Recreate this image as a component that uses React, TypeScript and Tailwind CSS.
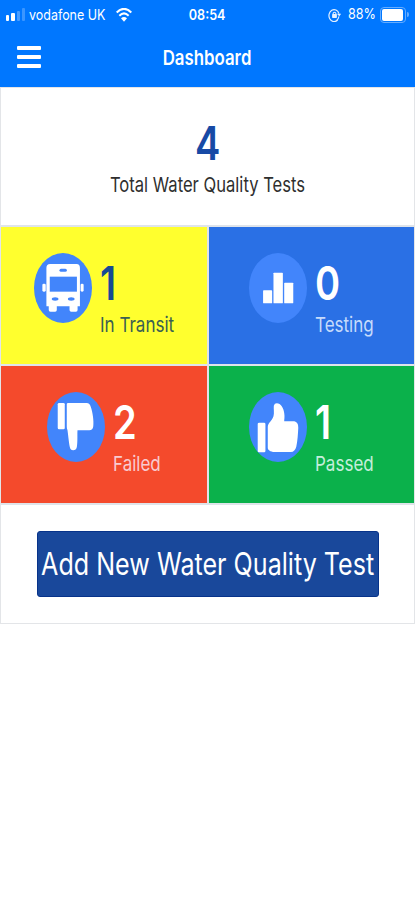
import React from "react";
import clsx from "clsx";

type TextProps = {
  children: React.ReactNode;
  className?: string;
};

// Slightly condensed single line text
const Narrow = ({ children, className }: TextProps) => (
  <span className={clsx("block w-max shrink-0 whitespace-nowrap", className)}>
    {children}
  </span>
);

const BusIcon = () => (
  <svg viewBox="102 83 173 210" className="h-[70px] w-[58px] shrink-0" preserveAspectRatio="none">
    <ellipse cx="188.5" cy="188" rx="86.5" ry="105" fill="#4285fb" />
    <g fill="#fff">
      <path d="M150 116H229Q239 116 239 128V243H232V254Q232 259 227 259H213Q208 259 208 254V243H170V254Q170 259 165 259H151Q146 259 146 254V243H139V128Q139 116 150 116Z" />
      <rect x="127" y="175" width="10" height="24" rx="4" />
      <rect x="241" y="175" width="9" height="24" rx="4" />
    </g>
    <g fill="#4285fb">
      <rect x="178" y="130" width="22" height="9" rx="4.5" />
      <rect x="149" y="154" width="81" height="45" />
      <ellipse cx="165" cy="221" rx="10" ry="5" />
      <ellipse cx="213" cy="221" rx="10" ry="5" />
    </g>
  </svg>
);

const ChartIcon = () => (
  <svg viewBox="134 83 173 210" className="h-[70px] w-[58px] shrink-0" preserveAspectRatio="none">
    <ellipse cx="220.5" cy="188" rx="86.5" ry="105" fill="#4285fb" />
    <g fill="#fff">
      <rect x="176" y="195" width="27" height="39" rx="2" />
      <rect x="207" y="142" width="28" height="92" rx="2" />
      <rect x="239" y="172" width="27" height="62" rx="2" />
    </g>
  </svg>
);

const ThumbsDownIcon = () => (
  <svg viewBox="143 95 173 210" className="h-[70px] w-[58px] shrink-0" preserveAspectRatio="none">
    <ellipse cx="229.5" cy="200" rx="86.5" ry="105" fill="#4285fb" />
    <g fill="#fff">
      <rect x="175" y="128" width="21" height="79" rx="4" />
      <path d="M202 131Q202 128 206 128H261Q271 128 274 141C279 156 283 180 281 198Q280 210 269 210H234C233 220 235 245 232 260Q230 270 221 270Q213 270 211 260C208 245 206 222 204 209Q202 204 202 199Z" />
    </g>
  </svg>
);

const ThumbsUpIcon = () => (
  <svg viewBox="134 95 173 210" className="h-[70px] w-[58px] shrink-0" preserveAspectRatio="none">
    <ellipse cx="220.5" cy="200" rx="86.5" ry="105" fill="#4285fb" />
    <g fill="#fff">
      <rect x="160" y="187" width="23" height="89" rx="4" />
      <path d="M190 199C191 187 203 182 207 168C210 157 207 145 208 136Q210 129 217 129C229 129 237 143 239 158C241 170 239 177 239 183H269Q281 185 281 202C280 221 279 241 275 259Q271 274 259 275H214C203 275 190 272 190 262Z" />
    </g>
  </svg>
);

const WifiIcon = () => (
  <svg viewBox="0 0 48 40" className="ml-[7px] h-[14px] w-[16px]" preserveAspectRatio="none" fill="none" stroke="#fff">
    <path d="M2 13Q24 -8 46 13" strokeWidth="6" />
    <path d="M10 22Q24 9 38 22" strokeWidth="6" />
    <path d="M24 39L15 29Q24 22 33 29Z" fill="#fff" stroke="none" />
  </svg>
);

const LockIcon = () => (
  <svg viewBox="0 0 38 42" className="h-[14px] w-[13px]" preserveAspectRatio="none" fill="none" stroke="#e4f0ff">
    <path d="M28 36A15 18 0 1 1 32 17" strokeWidth="3.5" />
    <path d="M26 17H39L33 25Z" fill="#e4f0ff" stroke="none" />
    <path d="M32 25Q31 32 26 36" strokeWidth="3" />
    <rect x="12" y="18" width="14" height="12" rx="2" fill="#e4f0ff" stroke="none" />
    <path d="M15 19V16Q19 9 23 16V19" strokeWidth="3" />
  </svg>
);

type TileProps = {
  icon: React.ReactNode;
  count: number;
  label: string;
  className: string;
  countClass?: string;
  labelClass: string;
};

const Tile = ({ icon, count, label, className, countClass, labelClass }: TileProps) => (
  <div className={clsx("flex h-[137px] items-start overflow-hidden pt-[26px]", className)}>
    {icon}
    <div className="ml-2 w-0">
      <Narrow
        className={clsx(
          "mt-[5px] h-[50px] origin-left scale-x-[.81] text-[47px] leading-[50px] font-semibold",
          countClass
        )}
      >
        {count}
      </Narrow>
      <Narrow className={clsx("mt-[4px] origin-left scale-x-[.83] text-[20.5px] leading-[26px]", labelClass)}>
        {label}
      </Narrow>
    </div>
  </div>
);

const Header = () => (
  <header className="h-[87px] bg-[#0077ff] text-white">
    <div className="grid h-[29px] grid-cols-[1fr_auto_1fr] items-center">
      <div className="flex items-center pl-[6px]">
        <div className="flex h-[14px] w-[20px] items-end gap-[2px] pb-px">
          <span className="h-[6px] w-[3px] rounded-[1px] bg-white" />
          <span className="h-[8px] w-[4px] rounded-[1px] bg-white" />
          <span className="h-[10px] w-[3px] rounded-[1px] bg-[#4a9dff]" />
          <span className="h-[13px] w-[3px] rounded-[1px] bg-[#3b96ff]" />
        </div>
        <div className="ml-[3px] w-[80px]">
          <Narrow className="origin-left scale-x-[.86] text-[14.5px]">vodafone UK</Narrow>
        </div>
        <WifiIcon />
      </div>
      <Narrow className="scale-x-[.87] text-[14.5px] font-semibold">08:54</Narrow>
      <div className="flex items-center justify-end pr-[6px]">
        <LockIcon />
        <div className="ml-[7px] w-[29px]">
          <Narrow className="origin-left scale-x-[.84] text-[15px]">88%</Narrow>
        </div>
        <div className="ml-[3px] flex h-[16px] w-[26px] rounded-[4px] border border-[#66adff] p-px">
          <span className="w-[21px] rounded-[2px] bg-white" />
        </div>
        <span className="ml-px h-[5px] w-[2px] rounded-r bg-[#66adff]" />
      </div>
    </div>
    <div className="grid h-[58px] grid-cols-[1fr_auto_1fr] items-start">
      <div className="mt-[17px] ml-[17px] flex w-6 flex-col gap-[5px]">
        <span className="h-[4px] rounded-[1px] bg-white" />
        <span className="h-[4px] rounded-[1px] bg-white" />
        <span className="h-[4px] rounded-[1px] bg-white" />
      </div>
      <Narrow className="mt-[16px] scale-x-[.82] text-[20.5px] leading-[26px] font-semibold">
        Dashboard
      </Narrow>
    </div>
  </header>
);

const App = () => {
  return (
    <div className="min-h-screen overflow-hidden bg-white font-['Inter',sans-serif]">
      <Header />
      <main className="border border-[#e3e5e8]">
        <section className="flex h-[137px] flex-col items-center bg-white pt-[30px]">
          <Narrow className="scale-x-[.81] text-[47px] leading-[50px] font-semibold text-[#174aa5]">4</Narrow>
          <Narrow className="mt-[4px] scale-x-[.81] text-[20.5px] leading-[26px] text-[#2e2e2e]">
            Total Water Quality Tests
          </Narrow>
        </section>

        <section className="grid grid-cols-[206px_1fr] gap-[2px] bg-[#dfe4ea] py-[2px]">
          <Tile
            icon={<BusIcon />}
            count={1}
            label="In Transit"
            className="bg-[#ffff2e] pl-[33px]"
            countClass="text-[#174a94]"
            labelClass="text-[#3a6052]"
          />
          <Tile
            icon={<ChartIcon />}
            count={0}
            label="Testing"
            className="bg-[#2a70e5] pl-[40px]"
            countClass="text-white"
            labelClass="text-[#c6dbfb]"
          />
          <Tile
            icon={<ThumbsDownIcon />}
            count={2}
            label="Failed"
            className="bg-[#f44a2c] pl-[46px]"
            countClass="text-white"
            labelClass="text-[#f9cbd0]"
          />
          <Tile
            icon={<ThumbsUpIcon />}
            count={1}
            label="Passed"
            className="bg-[#0bb14b] pl-[40px]"
            countClass="text-white"
            labelClass="text-[#c3eedb]"
          />
        </section>

        <section className="flex h-[118px] justify-center bg-white pt-[26px]">
          <button
            type="button"
            className="flex h-[66px] w-[342px] items-center justify-center rounded-[3px] border border-[#07338a] bg-[#19489b] text-white"
          >
            <Narrow className="scale-x-[.81] text-[31px]">Add New Water Quality Test</Narrow>
          </button>
        </section>
      </main>
    </div>
  );
};

export default App;
